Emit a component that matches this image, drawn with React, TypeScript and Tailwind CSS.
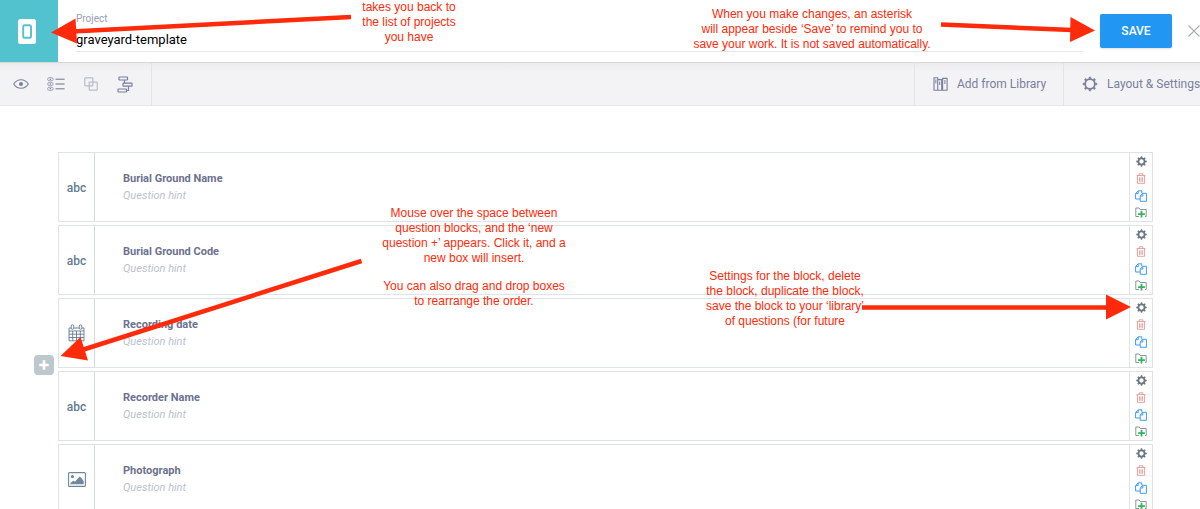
import React from "react";

type IconProps = { className?: string };

const GEAR_ANGLES = ["0", "45", "90", "135", "180", "225", "270", "315"];

function ThinGear({ className }: IconProps) {
  return (
    <svg viewBox="0 0 16 16" className={className} fill="none" stroke="currentColor" aria-hidden="true">
      <circle cx="8" cy="8" r="4.8" strokeWidth="1.7" />
      {GEAR_ANGLES.map((a) => (
        <path key={a} d="M6.9 2.6 7.3 1h1.4l.4 1.6z" fill="currentColor" strokeWidth="0.6" transform={`rotate(${a} 8 8)`} />
      ))}
    </svg>
  );
}

function BoldGear({ className }: IconProps) {
  return (
    <svg viewBox="0 0 16 16" className={className} fill="none" stroke="currentColor" aria-hidden="true">
      <circle cx="8" cy="8" r="4.4" strokeWidth="2.5" />
      {GEAR_ANGLES.map((a) => (
        <path key={a} d="M6.6 3.2 7 .4h2l.4 2.8z" fill="currentColor" stroke="none" transform={`rotate(${a} 8 8)`} />
      ))}
    </svg>
  );
}

function DeviceIcon() {
  return (
    <svg viewBox="0 0 18 25" className="h-[25px] w-[18px]" aria-hidden="true">
      <rect width="18" height="25" rx="2.5" fill="#fff" />
      <rect x="5.2" y="6.2" width="7.8" height="12.6" rx="1.6" fill="none" stroke="#52c2cf" strokeWidth="1.9" />
    </svg>
  );
}

function EyeIcon() {
  return (
    <svg viewBox="0 0 16 10" className="h-2.5 w-4" fill="none" stroke="currentColor" strokeWidth="1.1" aria-hidden="true">
      <path d="M.7 5C2.6 2 5.2.7 8 .7S13.4 2 15.3 5C13.4 8 10.8 9.3 8 9.3S2.6 8 .7 5z" />
      <circle cx="8" cy="5" r="2" fill="currentColor" stroke="none" />
    </svg>
  );
}

function ListIcon() {
  return (
    <svg viewBox="0 0 18 14" className="h-3.5 w-[18px]" fill="none" stroke="currentColor" aria-hidden="true">
      {[2.2, 7, 11.8].map((y) => (
        <g key={y}>
          <ellipse cx="3.4" cy={y} rx="2.9" ry="1.7" strokeWidth="0.7" />
          <circle cx="3.4" cy={y} r="0.8" fill="currentColor" stroke="none" />
          <path d={`M8.5 ${y}H17.6`} strokeWidth="1.1" />
        </g>
      ))}
    </svg>
  );
}

function GroupIcon() {
  return (
    <svg viewBox="0 0 14 14" className="h-3.5 w-3.5" fill="none" stroke="currentColor" strokeWidth="1.2" aria-hidden="true">
      <rect x=".8" y=".8" width="8" height="8" rx=".6" />
      <rect x="5.2" y="5.2" width="8" height="8" rx=".6" />
    </svg>
  );
}

function FlowIcon() {
  return (
    <svg viewBox="0 0 16 17" className="h-[17px] w-4" fill="none" stroke="currentColor" strokeWidth="1.2" aria-hidden="true">
      <rect x="2" y="1" width="8.5" height="3" rx=".5" />
      <rect x="6" y="7.2" width="9" height="3" rx=".5" />
      <rect x="1" y="13" width="8.5" height="3" rx=".5" />
      <path d="M7.5 4v3.2M11.5 10.2v4.3h-2" />
    </svg>
  );
}

function LibraryIcon() {
  return (
    <svg viewBox="0 0 15 14" className="h-3.5 w-[15px]" fill="none" stroke="currentColor" strokeWidth="1.1" aria-hidden="true">
      <path d="M1 .8h3.7v12.5H1zM4.700 2.600h4v10.700h-4M9.600 1.400h4.500v11.900H9.600z" />
      <path d="M2.850 2.500v4M6.700 4.500v3.500M11.900 3v4" strokeWidth="1" />
    </svg>
  );
}

function TrashIcon() {
  return (
    <svg viewBox="0 0 10 11" className="h-[11px] w-2.5" fill="none" stroke="currentColor" strokeWidth="0.8" aria-hidden="true">
      <path d="M.5 2.600h9M3.200 2.500V.8h3.600v1.700M1.400 2.800v7.500h7.200V2.800M3.400 4.300v4.500M5 4.300v4.500M6.600 4.300v4.500" />
    </svg>
  );
}

function CopyIcon() {
  return (
    <svg viewBox="0 0 12 12" className="h-3 w-3" fill="none" stroke="currentColor" strokeWidth="1" aria-hidden="true">
      <path d="M5.200 9H.6V3.500L3.200.8h3.600v2.600M3.200.9v2.700H.7" />
      <path d="M5.200 11.300V5.900l2.600-2.600h3.600v8zM7.800 3.400V6H5.300" />
    </svg>
  );
}

function FolderPlusIcon() {
  return (
    <svg viewBox="0 0 12 11" className="h-[11px] w-3" fill="none" aria-hidden="true">
      <path d="M4 9.500H.8V1h3.400l1 1.500h6v7H10" stroke="#7d8993" strokeWidth="0.9" />
      <path d="M6.500 3.700v6.800M3.100 7.100H9.900" stroke="#2fb55c" strokeWidth="1.800" />
    </svg>
  );
}

function CalendarIcon() {
  return (
    <svg viewBox="0 0 17 18" className="h-[18px] w-[17px]" fill="none" stroke="#647c90" strokeWidth="0.9" aria-hidden="true">
      <path d="M1 4h15v12.800H1zM1 7h15M1 10.200h15M1 13.500h15M4.700 7v9.800M8.500 7v9.800M12.300 7v9.800" />
      <rect x="3.200" y=".8" width="2.600" height="4.400" rx="1.200" fill="#fff" />
      <rect x="11.200" y=".8" width="2.600" height="4.400" rx="1.200" fill="#fff" />
    </svg>
  );
}

function PhotoIcon() {
  return (
    <svg viewBox="0 0 18 15" className="h-[15px] w-[18px]" aria-hidden="true">
      <rect x=".6" y=".6" width="16.800" height="13.800" rx="1" fill="none" stroke="#6f8799" strokeWidth="1.1" />
      <circle cx="4.400" cy="4.600" r="1.600" fill="#71889a" />
      <path d="M2.400 12.300V10.900l2.800-2.100 1.800.9 4.600-5.100 1.700 1.100 2.400 3.600v3z" fill="#71889a" />
    </svg>
  );
}

function Abc() {
  return <span className="pt-0.5 text-xs font-medium text-[#647c90]">abc</span>;
}

type Question = { title: string; icon: React.ReactNode; insertAfter?: boolean };

const QUESTIONS: Question[] = [
  { title: "Burial Ground Name", icon: <Abc /> },
  { title: "Burial Ground Code", icon: <Abc /> },
  { title: "Recording date", icon: <CalendarIcon />, insertAfter: true },
  { title: "Recorder Name", icon: <Abc /> },
  { title: "Photograph", icon: <PhotoIcon /> },
];

function RowAction({ label, className, children }: { label: string; className: string; children: React.ReactNode }) {
  return (
    <button type="button" aria-label={label} className={`flex h-[17px] w-full items-center justify-center ${className}`}>
      {children}
    </button>
  );
}

function QuestionRow({ title, icon, insertAfter }: Question) {
  return (
    <li className="relative flex border border-[#dfe2e6] bg-white">
      <div className="flex w-9 shrink-0 items-center justify-center border-r border-[#d3dbe1]">{icon}</div>
      <div className="flex flex-1 flex-col justify-center pl-7">
        <h2 className="text-[11px] leading-[17px] font-bold text-[#6c7190]">{title}</h2>
        <p className="text-[11px] leading-[17px] text-[#bcc0ce] italic">Question hint</p>
      </div>
      <div className="flex w-[23px] shrink-0 flex-col border-l border-[#dfe2e6]">
        <RowAction label="Settings" className="text-[#6b7883]"><BoldGear className="h-[11px] w-[11px]" /></RowAction>
        <RowAction label="Delete" className="text-[#d98a88]"><TrashIcon /></RowAction>
        <RowAction label="Duplicate" className="text-[#3f9bf0]"><CopyIcon /></RowAction>
        <RowAction label="Save to library" className=""><FolderPlusIcon /></RowAction>
      </div>
      {insertAfter && (
        <button
          type="button"
          aria-label="New question"
          className="absolute top-14 -left-[25px] flex h-5 w-5 items-center justify-center rounded bg-[#bcc8ce]"
        >
          <svg viewBox="0 0 10 10" className="h-2.5 w-2.5" aria-hidden="true">
            <path d="M5 .3v9.400M.3 5h9.400" stroke="#fff" strokeWidth="2.700" />
          </svg>
        </button>
      )}
    </li>
  );
}

function Note({ className, lines }: { className: string; lines: string[] }) {
  return (
    <p className={`absolute text-center text-xs leading-[15px] whitespace-nowrap text-[#ff2a0a] ${className}`}>
      {lines.map((line) => (
        <span key={line} className="block">{line}</span>
      ))}
    </p>
  );
}

function Annotations() {
  return (
    <div className="pointer-events-none absolute inset-0 overflow-hidden font-['Liberation_Sans',Arial,sans-serif]">
      <svg width="1200" height="509" className="absolute top-0 left-0" fill="#ff2a0a" stroke="#ff2a0a" aria-hidden="true">
        <g strokeWidth="4.500">
          <path d="M351 17 72 31.500" />
          <path d="M941 24.500 1072 30" />
          <path d="M361.500 261 82 350" />
          <path d="M862 307.500H1108" />
        </g>
        <g stroke="none">
          <path d="M51 32.500 75.500 18.500 77 43.500z" />
          <path d="M1095 30.500 1070.500 17 1070 42z" />
          <path d="M60.500 356 80.500 337 88 360.500z" />
          <path d="M1131 307 1106 294.500V319.500z" />
        </g>
      </svg>
      <Note className="top-0 left-[361px] w-24" lines={["takes you back to", "the list of projects", "you have"]} />
      <Note
        className="top-[7px] left-[691px] w-[242px]"
        lines={[
          "When you make changes, an asterisk",
          "will appear beside ‘Save’ to remind you to",
          "save your work. It is not saved automatically.",
        ]}
      />
      <Note
        className="top-[206px] left-[374px] w-[200px]"
        lines={["Mouse over the space between", "question blocks, and the ‘new", "question +’ appears. Click it, and a", "new box will insert."]}
      />
      <Note className="top-[279px] left-[374px] w-[200px]" lines={["You can also drag and drop boxes", "to rearrange the order."]} />
      <Note
        className="top-[269px] left-[685px] w-[200px]"
        lines={["Settings for the block, delete", "the block, duplicate the block,", "save the block to your ‘library’", "of questions (for future"]}
      />
    </div>
  );
}

export default function App() {
  return (
    <div className="relative min-h-screen overflow-hidden bg-white font-[Roboto,sans-serif]">
      <header className="flex h-[63px] items-stretch border-b border-[#d6d7d9]">
        <a href="#projects" aria-label="Projects" className="flex w-[58px] shrink-0 items-center justify-center bg-[#52c2cf] pr-1">
          <DeviceIcon />
        </a>
        <div className="ml-[18px] flex flex-1 flex-col pt-3">
          <label htmlFor="project" className="text-[10px] leading-[14px] text-[#9a9db0]">Project</label>
          <input
            id="project"
            defaultValue="graveyard-template"
            className="h-[26px] w-full border-b border-[#e7e8ea] pt-0.5 text-[13px] text-black outline-none"
          />
        </div>
        <div className="-mr-0.5 ml-[17px] flex shrink-0 items-center gap-3.5">
          <button type="button" className="h-[34px] w-[72px] rounded-xs bg-[#2196f3] text-xs font-medium text-white shadow-sm">
            SAVE
          </button>
          <button type="button" aria-label="Close" className="flex w-4 justify-center text-[#a9adb5]">
            <svg viewBox="0 0 14 14" className="h-3.5 w-3.5" aria-hidden="true">
              <path d="M1.500 1.500 12.500 12.500M12.500 1.500 1.500 12.500" stroke="currentColor" strokeWidth="1.100" />
            </svg>
          </button>
        </div>
      </header>

      <nav className="flex h-[43px] items-stretch justify-between border-b border-[#e5e6ea] bg-[#f3f3f6] bg-linear-to-b from-[#ececef] to-[#f3f3f6] to-20% text-[#7a7f9c]">
        <div className="flex items-center border-r border-[#e2e3e8] pr-[9px] pl-1">
          <button type="button" aria-label="Preview" className="flex w-[34px] justify-center"><EyeIcon /></button>
          <button type="button" aria-label="Show list" className="flex w-9 justify-center"><ListIcon /></button>
          <button type="button" aria-label="Group" className="flex w-[34px] justify-center text-[#b9bccb]"><GroupIcon /></button>
          <button type="button" aria-label="Cascade" className="flex w-[34px] justify-center"><FlowIcon /></button>
        </div>
        <div className="flex text-xs">
          <button type="button" className="flex w-[149px] items-center gap-[9px] border-l border-[#e2e3e8] pl-[18px]">
            <LibraryIcon />
            Add from Library
          </button>
          <button type="button" className="flex w-[137px] items-center gap-[9px] border-l border-[#e2e3e8] pl-[18px] whitespace-nowrap">
            <ThinGear className="h-4 w-4 shrink-0" />
            Layout &amp; Settings
          </button>
        </div>
      </nav>

      <main className="pt-[46px] pr-[47px] pl-[58px]">
        <ul className="flex flex-col gap-[3px]">
          {QUESTIONS.map((q) => (
            <QuestionRow key={q.title} {...q} />
          ))}
        </ul>
      </main>

      <Annotations />
    </div>
  );
}
